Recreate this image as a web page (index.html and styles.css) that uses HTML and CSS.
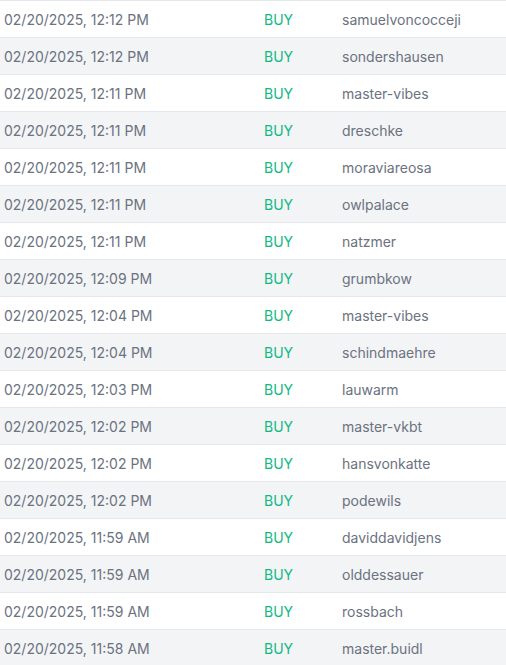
FILE: index.html
```html
<!DOCTYPE html>
<html>
<head>
<meta charset="utf-8">
<link rel="stylesheet" href="styles.css">
</head>
<body>
<div class="table">
  <div class="row"><span class="date">02/20/2025, 12:12 PM</span><span class="side">BUY</span><span class="user">samuelvoncocceji</span></div>
  <div class="row"><span class="date">02/20/2025, 12:12 PM</span><span class="side">BUY</span><span class="user">sondershausen</span></div>
  <div class="row"><span class="date">02/20/2025, 12:11 PM</span><span class="side">BUY</span><span class="user">master-vibes</span></div>
  <div class="row"><span class="date">02/20/2025, 12:11 PM</span><span class="side">BUY</span><span class="user">dreschke</span></div>
  <div class="row"><span class="date">02/20/2025, 12:11 PM</span><span class="side">BUY</span><span class="user">moraviareosa</span></div>
  <div class="row"><span class="date">02/20/2025, 12:11 PM</span><span class="side">BUY</span><span class="user">owlpalace</span></div>
  <div class="row"><span class="date">02/20/2025, 12:11 PM</span><span class="side">BUY</span><span class="user">natzmer</span></div>
  <div class="row"><span class="date">02/20/2025, 12:09 PM</span><span class="side">BUY</span><span class="user">grumbkow</span></div>
  <div class="row"><span class="date">02/20/2025, 12:04 PM</span><span class="side">BUY</span><span class="user">master-vibes</span></div>
  <div class="row"><span class="date">02/20/2025, 12:04 PM</span><span class="side">BUY</span><span class="user">schindmaehre</span></div>
  <div class="row"><span class="date">02/20/2025, 12:03 PM</span><span class="side">BUY</span><span class="user">lauwarm</span></div>
  <div class="row"><span class="date">02/20/2025, 12:02 PM</span><span class="side">BUY</span><span class="user">master-vkbt</span></div>
  <div class="row"><span class="date">02/20/2025, 12:02 PM</span><span class="side">BUY</span><span class="user">hansvonkatte</span></div>
  <div class="row"><span class="date">02/20/2025, 12:02 PM</span><span class="side">BUY</span><span class="user">podewils</span></div>
  <div class="row"><span class="date">02/20/2025, 11:59 AM</span><span class="side">BUY</span><span class="user">daviddavidjens</span></div>
  <div class="row"><span class="date">02/20/2025, 11:59 AM</span><span class="side">BUY</span><span class="user">olddessauer</span></div>
  <div class="row"><span class="date">02/20/2025, 11:59 AM</span><span class="side">BUY</span><span class="user">rossbach</span></div>
  <div class="row"><span class="date">02/20/2025, 11:58 AM</span><span class="side">BUY</span><span class="user">master.buidl</span></div>
</div>
</body>
</html>
```
FILE: styles.css
```css
html, body {
  margin: 0;
  padding: 0;
  background: #ffffff;
}
body {
  font-family: Inter, "Noto Sans", sans-serif;
  font-size: 14px;
  color: #6b7280;
}
.table {
  display: flex;
  flex-direction: column;
}
.row {
  display: grid;
  grid-template-columns: 260px 78px 1fr;
  align-items: center;
  height: 36px;
  border-top: 1px solid #e5e7eb;
  padding-left: 4px;
  background: #ffffff;
}
.row:nth-child(even) {
  background: #f3f4f6;
}
.side {
  color: #10b981;
}
```
